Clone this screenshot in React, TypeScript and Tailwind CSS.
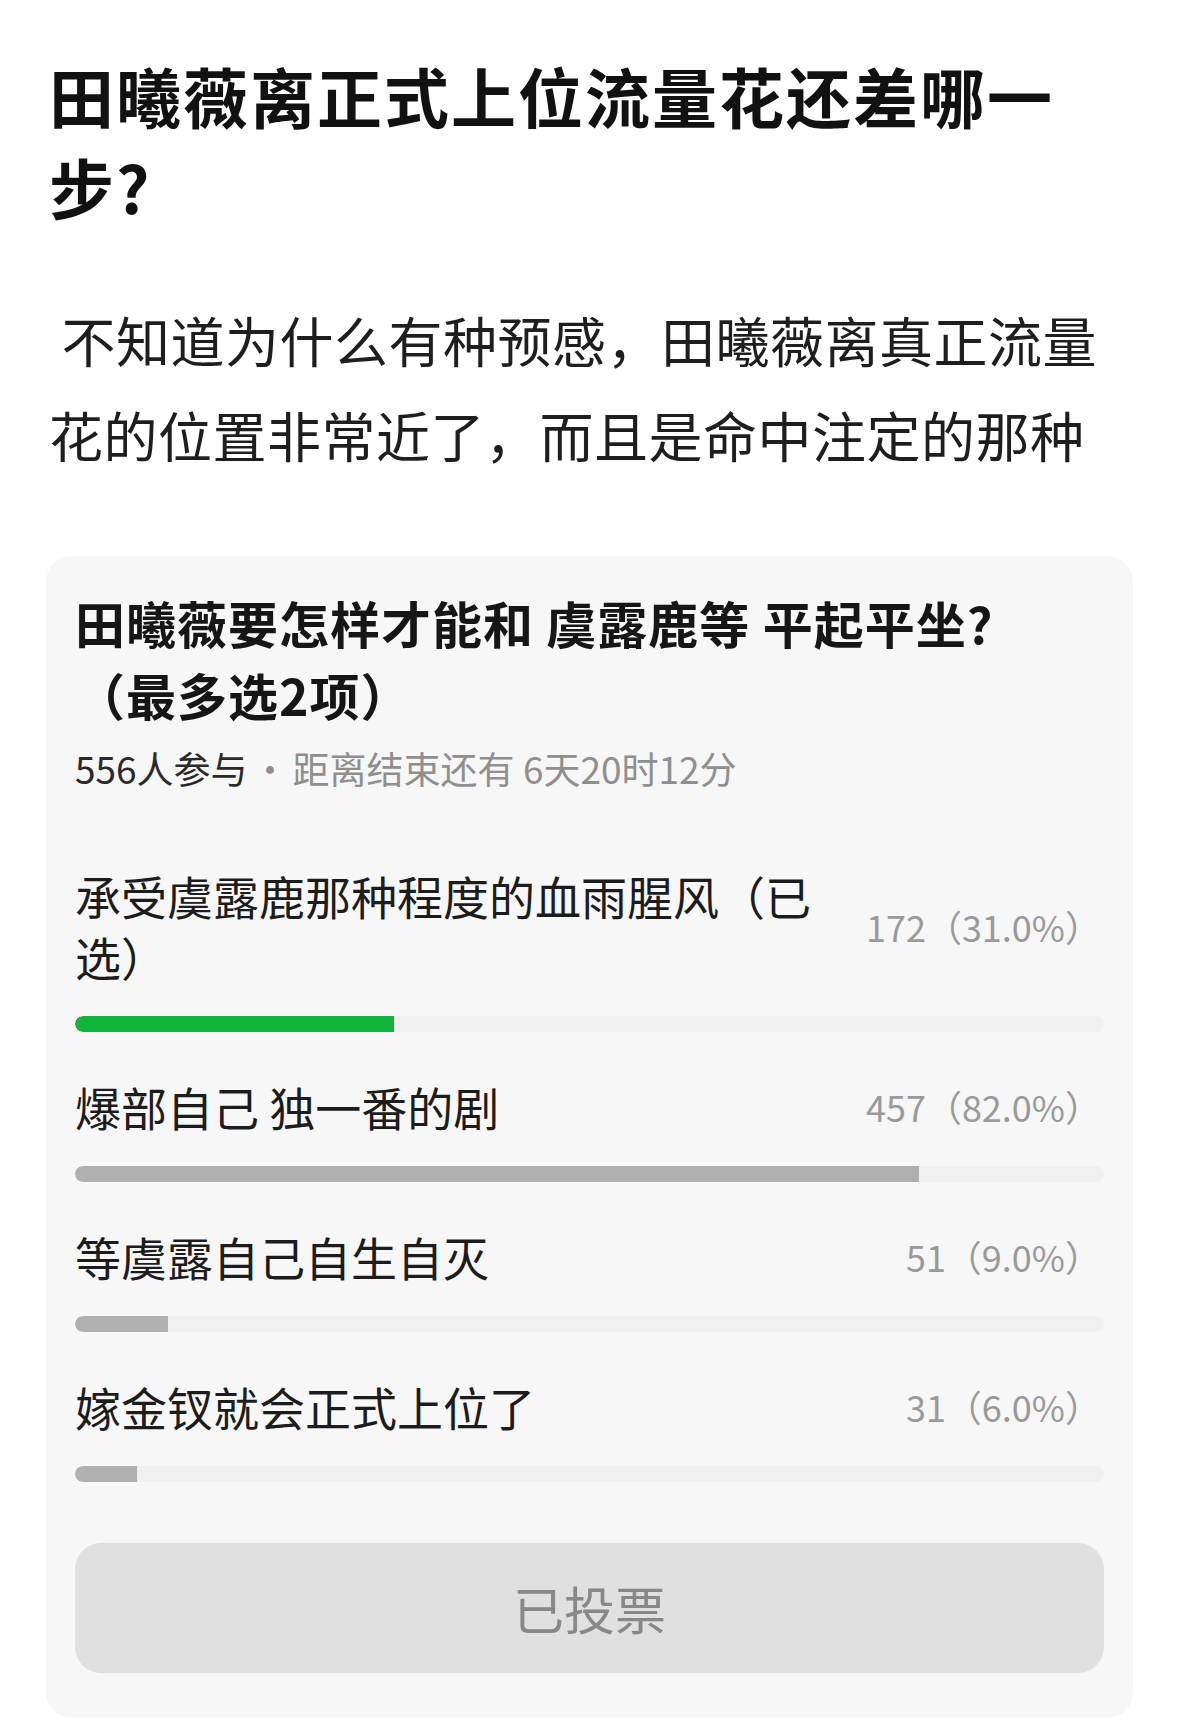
const options = [
  { label: "承受虞露鹿那种程度的血雨腥风（已选）", count: "172（31.0%）", pct: 31, picked: true },
  { label: "爆部自己 独一番的剧", count: "457（82.0%）", pct: 82, picked: false },
  { label: "等虞露自己自生自灭", count: "51（9.0%）", pct: 9, picked: false },
  { label: "嫁金钗就会正式上位了", count: "31（6.0%）", pct: 6, picked: false },
];

function PollOption({ label, count, pct, picked }: (typeof options)[number]) {
  return (
    <div className="mt-[44px] first:mt-0">
      <div className="flex items-center">
        <div className="w-[745px] text-[46px] leading-[61px] text-[#1c1c1c]">{label}</div>
        <div className="ml-auto pr-[3px] text-[36px] leading-[61px] text-[#9a9a9a]">{count}</div>
      </div>
      <div className="mt-[29px] h-[16px] w-full overflow-hidden rounded-full bg-[#f0f0f0]">
        <div
          className={picked ? "h-full rounded-l-full bg-[#13b43b]" : "h-full rounded-l-full bg-[#b0b0b0]"}
          style={{ width: `${pct}%` }}
        />
      </div>
    </div>
  );
}

export default function App() {
  return (
    <div
      className="h-[1720px] w-[1179px] overflow-hidden bg-white px-[46px] pt-[50px]"
      style={{ fontFamily: '"Noto Sans CJK SC", "Noto Sans", sans-serif' }}
    >
      <h1 className="w-[1030px] pl-[3px] text-[65px] font-bold leading-[91px] tracking-[2px] text-[#111]">
        田曦薇离正式上位流量花还差哪一步?
      </h1>

      <p className="mt-[60px] w-[1080px] pl-[3px] text-[54px] leading-[95px] tracking-[0.5px] text-[#1e1e1e]">
        {"\u00a0"}不知道为什么有种预感，田曦薇离真正流量花的位置非常近了，而且是命中注定的那种
      </p>

      <div className="mt-[74px] h-[1162px] rounded-[26px] bg-[#f7f7f7] px-[29px] pt-[30px]">
        <h2 className="text-[50px] font-bold leading-[72px] tracking-[1px] text-[#161616]">
          田曦薇要怎样才能和 虞露鹿等 平起平坐?
          <br />
          （最多选2项）
        </h2>
        <div className="mt-[13px] text-[37px] leading-[50px]">
          <span className="text-[#2a2a2a]">556人参与</span>
          <span className="mx-[4px] text-[#8f8f8f]">·</span>
          <span className="text-[#8f8f8f]">距离结束还有 6天20时12分</span>
        </div>

        <div className="mt-[72px]">
          {options.map((o) => (
            <PollOption key={o.label} {...o} />
          ))}
        </div>

        <button className="mt-[61px] flex h-[130px] w-full items-center justify-center rounded-[26px] bg-[#e0e0e0] text-[51px] text-[#888]">
          已投票
        </button>
      </div>
    </div>
  );
}
